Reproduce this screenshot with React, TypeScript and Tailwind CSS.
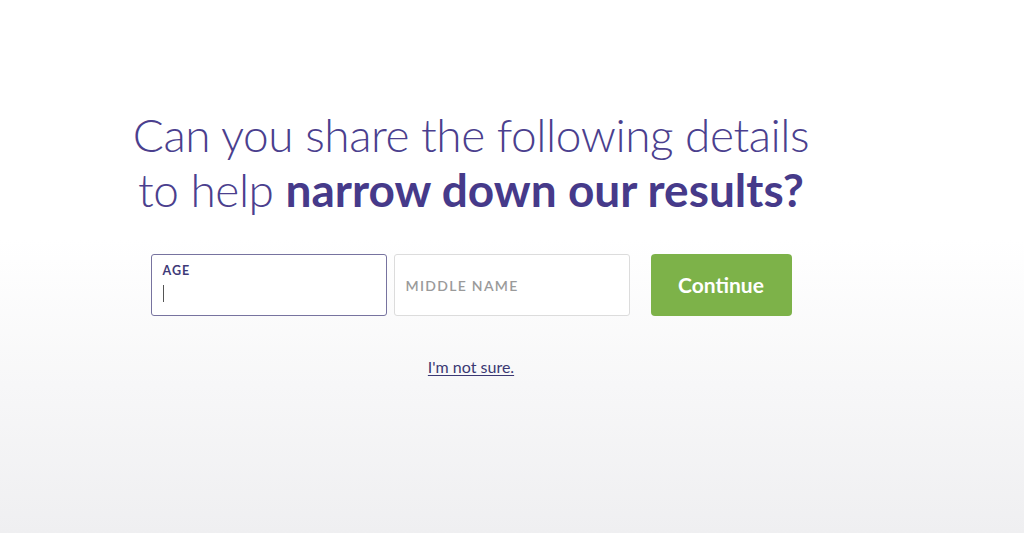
export default function App() {
  return (
    <div
      className="min-h-[533px] w-full bg-gradient-to-b from-white from-45% to-[#efeff1]"
      style={{ fontFamily: "Lato, 'Noto Sans', sans-serif" }}
    >
      <div className="w-[942px] pt-[107px] text-center">
        <h1 className="text-[46px] leading-[55px] font-light text-[#4b3f8e] tracking-[-0.45px]">
          Can you share the following details
          <br />
          to help <span className="font-bold text-[#463a8a] tracking-[0px]">narrow down our results?</span>
        </h1>

        <div className="mt-[37px] flex justify-center items-stretch">
          <div className="w-[236px] h-[62px] border border-[#77739f] rounded-[3px] bg-white text-left px-[11px] pt-[9px]">
            <div className="text-[12.5px] font-bold tracking-[1px] text-[#3f3a78] leading-[14px]">AGE</div>
            <div className="mt-[7px] w-px h-[17px] bg-[#555]"></div>
          </div>
          <div className="ml-[7px] w-[236px] h-[62px] border border-[#dcdcdc] rounded-[3px] bg-white text-left px-[11px] flex items-center">
            <span className="text-[14px] font-semibold tracking-[1.3px] text-[#9a9a9a]">MIDDLE NAME</span>
          </div>
          <button className="ml-[21px] w-[141px] h-[62px] rounded-[4px] bg-[#7db249] text-white text-[21px] font-bold">
            Continue
          </button>
        </div>

        <div className="mt-[39px]">
          <a href="#" className="text-[16px] text-[#3b3873] underline underline-offset-2">
            I'm not sure.
          </a>
        </div>
      </div>
    </div>
  );
}
